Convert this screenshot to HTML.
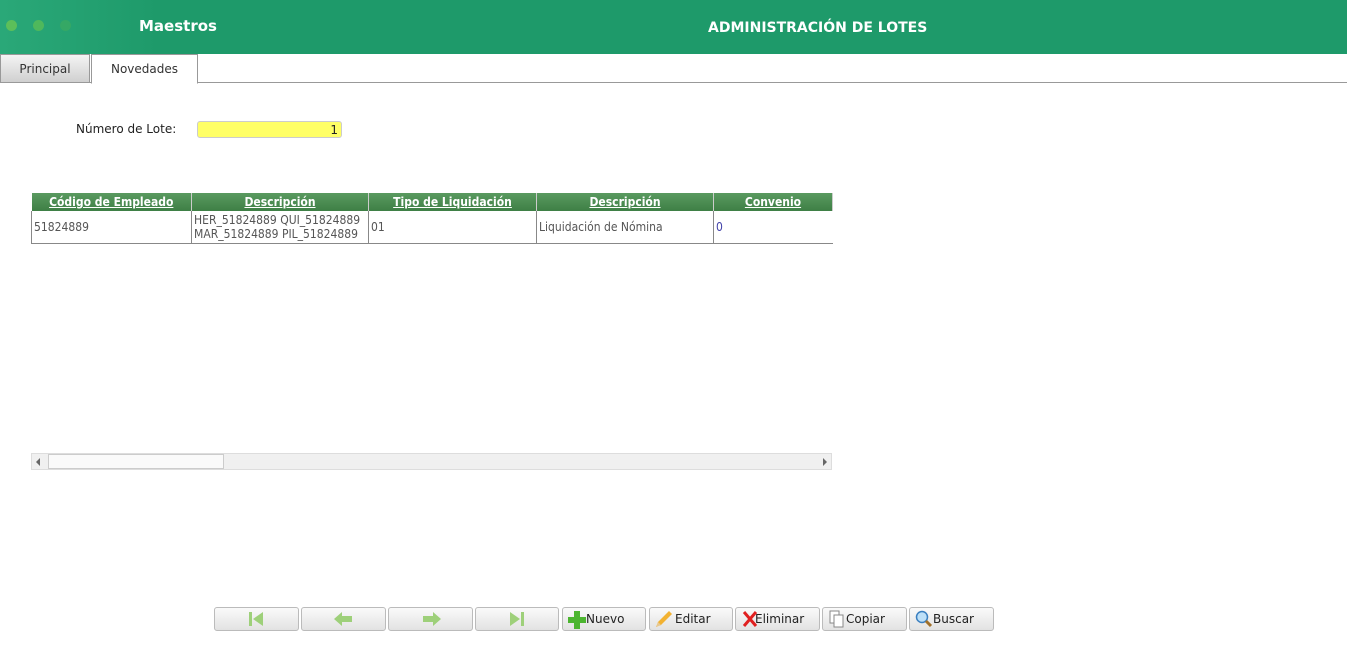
<!DOCTYPE html>
<html><head><meta charset="utf-8"><style>
*{box-sizing:border-box;margin:0;padding:0}
body{width:1347px;height:656px;background:#fff;font-family:"DejaVu Sans","Liberation Sans",sans-serif;position:relative;overflow:hidden;font-size:12px;color:#222}
.hdr{position:absolute;left:0;top:0;width:1347px;height:54px;background:linear-gradient(90deg,#2aa878 0,#1e9a6a 160px,#1e9a6a);}
.dot{position:absolute;top:20px;width:11px;height:11px;border-radius:50%}
.t{position:absolute;color:#fff;font-weight:bold}
.tabs{position:absolute;top:54px;left:0;width:1347px;height:29px;border-bottom:1px solid #999}
.tab{position:absolute;height:29px;font-size:12px;text-align:center;line-height:28px}
table{position:absolute;left:31px;top:193px;border-collapse:collapse;font-size:12px;font-family:"DejaVu Sans Condensed","DejaVu Sans",sans-serif;table-layout:fixed}
th{background:linear-gradient(#5a9a60,#3e7f45);color:#fff;text-decoration:underline;height:18px;font-weight:bold;border-right:1px solid #ccc;padding:0}
td{height:32px;border:1px solid #888;border-top:none;color:#555;padding:0 2px;line-height:14px;vertical-align:middle;white-space:nowrap;overflow:hidden}
.btn{position:absolute;top:607px;height:24px;border:1px solid #bbb;border-radius:3px;background:linear-gradient(#fafafa,#e2e2e2);font-size:12px;color:#222;line-height:23px}
</style></head><body>
<div class="hdr">
<div class="dot" style="left:6px;background:#5cbf5a"></div>
<div class="dot" style="left:33px;background:#4fb85c"></div>
<div class="dot" style="left:60px;background:#35a865"></div>
<div class="t" style="left:139px;top:17px;font-size:15px">Maestros</div>
<div class="t" style="left:708px;top:20px;font-size:14px">ADMINISTRACIÓN DE LOTES</div>
</div>
<div class="tabs">
<div class="tab" style="left:0;width:90px;background:linear-gradient(#f4f4f4,#d0d0d0);border:1px solid #999;color:#333">Principal</div>
<div class="tab" style="left:91px;width:107px;background:#fff;border:1px solid #999;border-bottom:1px solid #fff;height:30px;color:#333">Novedades</div>
</div>
<div style="position:absolute;left:76px;top:122px;font-size:12px">Número de Lote:</div>
<div style="position:absolute;left:197px;top:121px;width:145px;height:17px;background:#ffff66;border:1px solid #ccc;border-radius:3px;text-align:right;padding-right:3px;font-size:12px;line-height:17px">1</div>
<table>
<colgroup><col style="width:160px"><col style="width:177px"><col style="width:168px"><col style="width:177px"><col style="width:119px"></colgroup>
<tr><th>Código de Empleado</th><th>Descripción</th><th>Tipo de Liquidación</th><th>Descripción</th><th>Convenio</th></tr>
<tr><td>51824889</td><td>HER_51824889 QUI_51824889<br>MAR_51824889 PIL_51824889</td><td>01</td><td>Liquidación de Nómina</td><td style="color:#44a;border-right:none">0</td></tr>
</table>
<div style="position:absolute;left:31px;top:453px;width:801px;height:17px;background:#f0f0f0;border:1px solid #ddd">
<div style="position:absolute;left:16px;top:0;width:176px;height:15px;background:#fafafa;border:1px solid #ccc"></div>
<div style="position:absolute;left:4px;top:4px;border:4px solid transparent;border-right-color:#666;border-left:none"></div>
<div style="position:absolute;right:4px;top:4px;border:4px solid transparent;border-left-color:#666;border-right:none"></div>
</div>
<div class="btn" style="left:214px;width:85px"><svg width="85" height="22"><rect x="34" y="4" width="3" height="14" fill="#9ed07a"/><path d="M38 11 L48 4 L48 18Z" fill="#9ed07a"/></svg></div>
<div class="btn" style="left:301px;width:85px"><svg width="85" height="22"><path d="M32 11 L40 4 L40 8 L50 8 L50 14 L40 14 L40 18Z" fill="#9ed07a"/></svg></div>
<div class="btn" style="left:388px;width:85px"><svg width="85" height="22"><path d="M52 11 L44 4 L44 8 L34 8 L34 14 L44 14 L44 18Z" fill="#9ed07a"/></svg></div>
<div class="btn" style="left:475px;width:84px"><svg width="84" height="22"><path d="M34 4 L44 11 L34 18Z" fill="#9ed07a"/><rect x="45" y="4" width="3" height="14" fill="#9ed07a"/></svg></div>
<div class="btn" style="left:562px;width:84px"><svg width="20" height="22" style="position:absolute;left:4px;top:0"><path d="M7 3h6v6h6v6h-6v6h-6v-6h-6v-6h6z" fill="#4cb530"/></svg><span style="position:absolute;left:23px">Nuevo</span></div>
<div class="btn" style="left:649px;width:84px"><svg width="20" height="22" style="position:absolute;left:3px;top:0"><path d="M3 19 L5 14 L16 3 L19 6 L8 17Z" fill="#f2b232"/><path d="M3 19 L5 14 L8 17Z" fill="#e8c890"/></svg><span style="position:absolute;left:25px">Editar</span></div>
<div class="btn" style="left:735px;width:85px"><svg width="18" height="22" style="position:absolute;left:5px;top:0"><path d="M3 4 L15 18 M15 4 L3 18" stroke="#e02020" stroke-width="3"/></svg><span style="position:absolute;left:19px">Eliminar</span></div>
<div class="btn" style="left:822px;width:85px"><svg width="18" height="22" style="position:absolute;left:5px;top:0"><rect x="2" y="3" width="9" height="12" fill="#fff" stroke="#888"/><rect x="6" y="7" width="9" height="12" fill="#fff" stroke="#888"/></svg><span style="position:absolute;left:23px">Copiar</span></div>
<div class="btn" style="left:909px;width:85px"><svg width="20" height="22" style="position:absolute;left:4px;top:0"><circle cx="8" cy="9" r="5.5" fill="#bde0f8" stroke="#3a7fc0" stroke-width="1.5"/><path d="M12 13 L17 18" stroke="#a0702a" stroke-width="3"/></svg><span style="position:absolute;left:23px">Buscar</span></div>
</body></html>
